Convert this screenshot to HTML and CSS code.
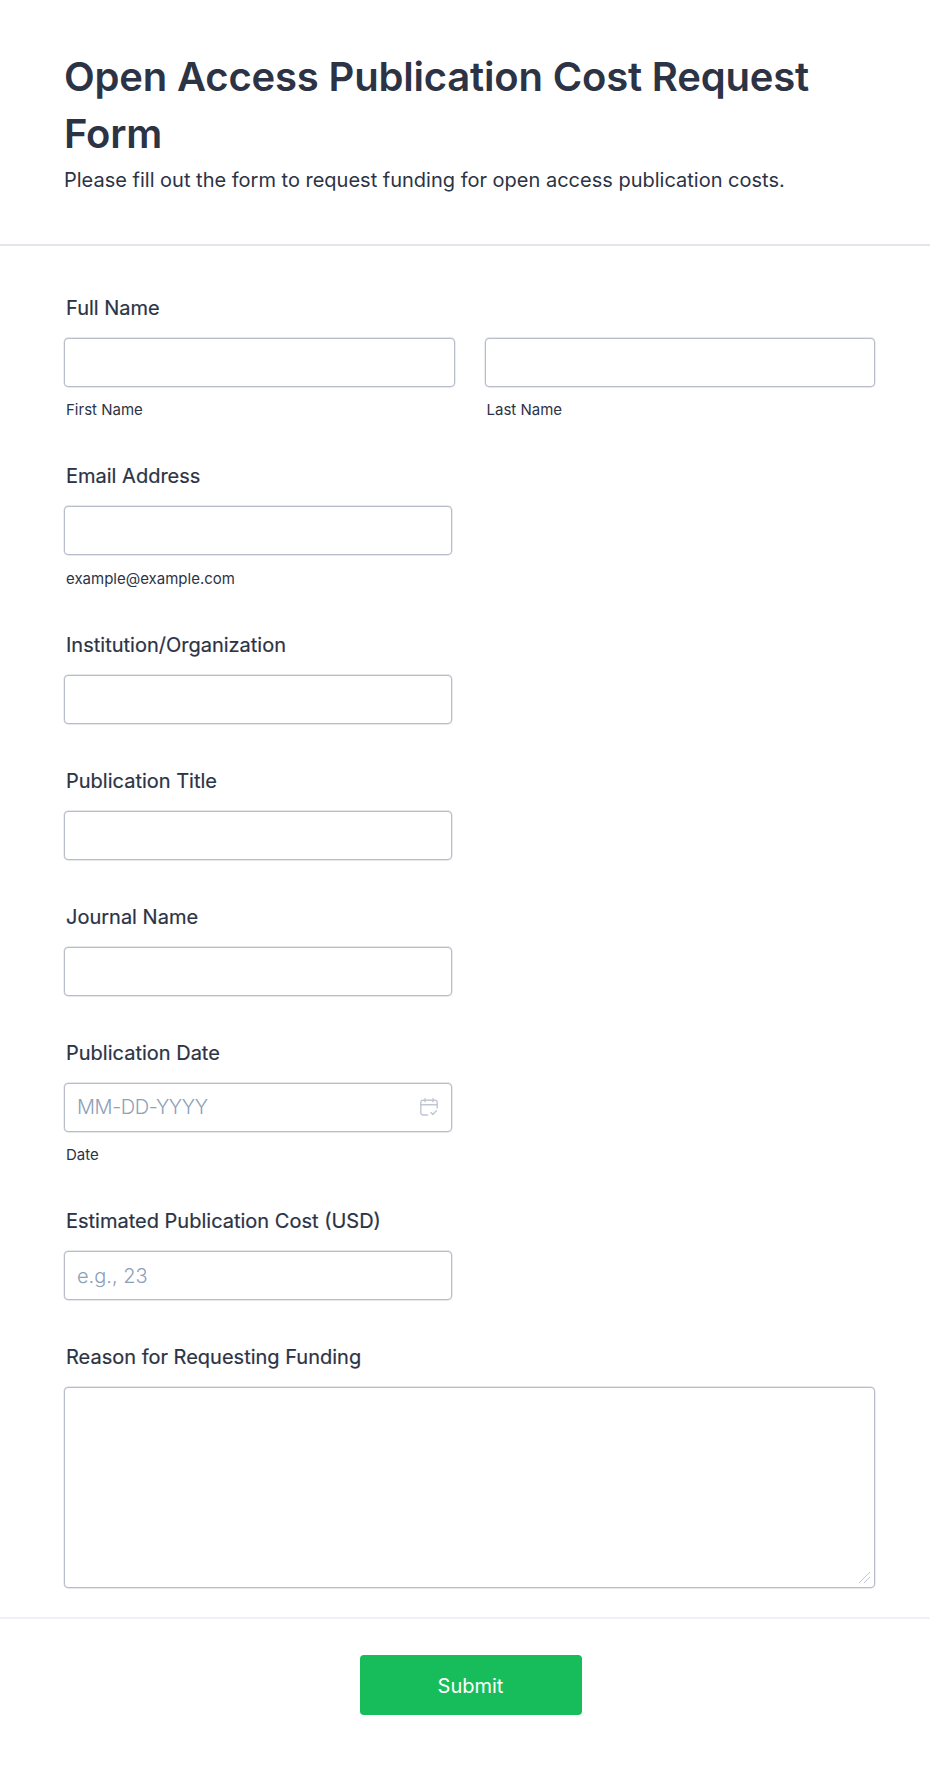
FILE: index.html
```html
<!DOCTYPE html>
<html lang="en">
<head>
<meta charset="utf-8">
<title>Open Access Publication Cost Request Form</title>
<link rel="stylesheet" href="styles.css">
</head>
<body>
<form class="form">
  <header class="header">
    <h1 class="title">Open Access Publication Cost Request Form</h1>
    <p class="subtitle">Please fill out the form to request funding for open access publication costs.</p>
  </header>
  <div class="fields">
    <div class="field">
      <label class="label">Full Name</label>
      <div class="name-row">
        <div class="name-col"><input class="input" type="text"><span class="sublabel">First Name</span></div>
        <div class="name-col"><input class="input" type="text"><span class="sublabel">Last Name</span></div>
      </div>
    </div>
    <div class="field">
      <label class="label">Email Address</label>
      <input class="input half" type="text">
      <span class="sublabel">example@example.com</span>
    </div>
    <div class="field">
      <label class="label">Institution/Organization</label>
      <input class="input half" type="text">
    </div>
    <div class="field">
      <label class="label">Publication Title</label>
      <input class="input half" type="text">
    </div>
    <div class="field">
      <label class="label">Journal Name</label>
      <input class="input half" type="text">
    </div>
    <div class="field">
      <label class="label">Publication Date</label>
      <div class="date-wrap half">
        <input class="input date-input" type="text" placeholder="MM-DD-YYYY">
        <svg class="cal-icon" width="18" height="18" viewBox="0 0 18 18" fill="none" stroke="#c0c6d2" stroke-width="1.4" stroke-linecap="round" stroke-linejoin="round">
          <path d="M7.5 17H3a2.2 2.2 0 0 1-2.2-2.2V4.4A2.2 2.2 0 0 1 3 2.2h12a2.2 2.2 0 0 1 2.2 2.2V10"/>
          <path d="M.8 6.8h16.4"/>
          <path d="M5 .8v3M13 .8v3"/>
          <path d="M11 14.6l1.8 1.8 3.6-3.6"/>
        </svg>
      </div>
      <span class="sublabel">Date</span>
    </div>
    <div class="field">
      <label class="label">Estimated Publication Cost (USD)</label>
      <input class="input half" type="text" placeholder="e.g., 23">
    </div>
    <div class="field">
      <label class="label">Reason for Requesting Funding</label>
      <textarea class="textarea"></textarea>
    </div>
  </div>
  <footer class="footer">
    <button class="submit" type="button">Submit</button>
  </footer>
</form>
</body>
</html>
```
FILE: styles.css
```css
* { box-sizing: border-box; }
html, body { margin: 0; padding: 0; background: #fff; }
body { font-family: Inter, "Liberation Sans", sans-serif; color: #2c3345; }
.form { width: 930px; height: 1765px; display: flex; flex-direction: column; }
.header { height: 246px; padding: 48px 64px 0; border-bottom: 2px solid #e3e5ee; }
.title { margin: 0; font-size: 40px; line-height: 57.4px; font-weight: 600; letter-spacing: -0.18px; color: #2c3345; }
.subtitle { margin: 1px 0 0; font-size: 20px; line-height: 32px; font-weight: 400; }
.fields { padding: 48px 55px 0 64px; display: flex; flex-direction: column; gap: 43px; height: 1373px; border-bottom: 2px solid #f0f1f6; }
.field { display: flex; flex-direction: column; align-items: flex-start; }
.label { font-size: 20px; line-height: 28px; font-weight: 400; margin: 0 0 16px 2px; -webkit-text-stroke: 0.2px #2c3345; }
.input { display: block; width: 100%; height: 49px; padding: 0 12px; font: 400 20px Inter, "Liberation Sans", sans-serif; color: #2c3345; background: #fff; border: 1px solid #b8bdc9; border-radius: 4px; outline: none; box-shadow: 0 0 0 0.4px rgba(184, 189, 201, 0.7); }
.input::placeholder { color: #8ca0b8; opacity: 1; font-weight: 300; }
.date-input::placeholder { letter-spacing: -0.4px; }
.half { width: 388px; }
.name-row { display: flex; gap: 30px; width: 100%; }
.name-col { width: 391px; }
.sublabel { display: block; margin: 13.3px 0 0 2px; font-size: 15px; line-height: 19.1px; color: #2c3345; }
.date-wrap { position: relative; }
.cal-icon { position: absolute; top: 15px; right: 14px; }
.textarea { display: block; width: 811px; height: 201px; padding: 8px 12px; font: 400 18px Inter, "Liberation Sans", sans-serif; background: #fff; border: 1px solid #b8bdc9; border-radius: 4px; outline: none; box-shadow: 0 0 0 0.4px rgba(184, 189, 201, 0.7); }
.textarea::-webkit-resizer { background: linear-gradient(135deg, transparent 47%, #c3c8d6 47%, #c3c8d6 53%, transparent 53%, transparent 70%, #c3c8d6 70%, #c3c8d6 76%, transparent 76%) 0 0 / 11px 11px no-repeat; }
.footer { padding-top: 36px; display: flex; justify-content: center; padding-left: 11px; }
.submit { width: 222px; height: 60px; padding: 2px 0 0; border: 0; border-radius: 4px; background: #18bd5b; color: #fff; font: 400 20px Inter, "Liberation Sans", sans-serif; }
```
